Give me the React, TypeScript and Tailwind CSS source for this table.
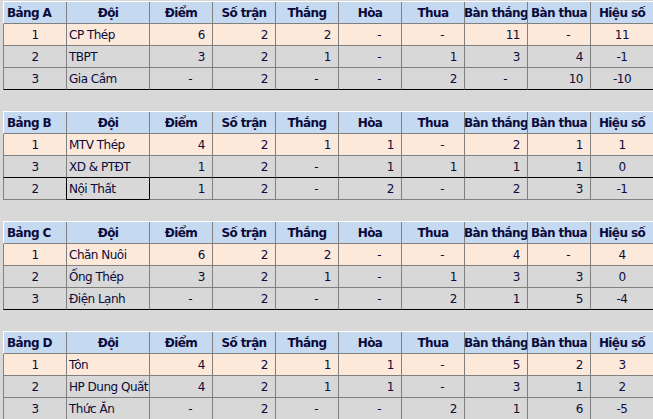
import React from "react";

type Group = {
    name: string;
    rows: string[][];
    lines: ("gray" | "black")[];
    boxed?: [number, number];
};

const groups: Group[] = [
    {
        name: "Bảng A",
        rows: [
            ["1", "CP Thép", "6", "2", "2", "-", "-", "11", "-", "11"],
            ["2", "TBPT", "3", "2", "1", "-", "1", "3", "4", "-1"],
            ["3", "Gia Cầm", "-", "2", "-", "-", "2", "-", "10", "-10"],
        ],
        lines: ["gray", "gray", "black"],
    },
    {
        name: "Bảng B",
        rows: [
            ["1", "MTV Thép", "4", "2", "1", "1", "-", "2", "1", "1"],
            ["3", "XD & PTĐT", "1", "2", "-", "1", "1", "1", "1", "0"],
            ["2", "Nội Thất", "1", "2", "-", "2", "-", "2", "3", "-1"],
        ],
        lines: ["gray", "black", "gray"],
        boxed: [2, 1],
    },
    {
        name: "Bảng C",
        rows: [
            ["1", "Chăn Nuôi", "6", "2", "2", "-", "-", "4", "-", "4"],
            ["2", "Ống Thép", "3", "2", "1", "-", "1", "3", "3", "0"],
            ["3", "Điện Lạnh", "-", "2", "-", "-", "2", "1", "5", "-4"],
        ],
        lines: ["gray", "gray", "black"],
    },
    {
        name: "Bảng D",
        rows: [
            ["1", "Tôn", "4", "2", "1", "1", "-", "5", "2", "3"],
            ["2", "HP Dung Quất", "4", "2", "1", "1", "-", "3", "1", "2"],
            ["3", "Thức Ăn", "-", "2", "-", "-", "2", "1", "6", "-5"],
        ],
        lines: ["gray", "gray", "black"],
    },
];

const heads = ["Đội", "Điểm", "Số trận", "Thắng", "Hòa", "Thua", "Bàn thắng", "Bàn thua", "Hiệu số"];

function align(i: number, v: string) {
    if (i === 0 || i === 9) return "justify-center";
    if (i === 1) return "justify-start pl-[2px]";
    return v === "-" ? "justify-end pr-[20px]" : "justify-end pr-[7px]";
}

function Table({ g }: { g: Group }) {
    return (
        <div className="flex flex-col">
            <div className="flex h-[23px] border-t border-white bg-[#c5d9f1] font-bold tracking-[-0.6px]">
                <div className="w-[63px] shrink-0 flex items-center pl-[3px] border-l border-white border-b border-b-[#808080]">
                    {g.name}
                </div>
                {heads.map((h, i) => (
                    <div
                        key={h}
                        className={`${i === 0 ? "w-[83px]" : "w-[63px]"} shrink-0 flex items-center justify-center whitespace-nowrap border-l border-b border-[#808080]`}
                    >
                        {h}
                    </div>
                ))}
            </div>
            {g.rows.map((r, ri) => (
                <div key={ri} className={`flex h-[22px] ${ri === 0 ? "bg-[#fde9d9]" : "bg-[#d8d8d8]"}`}>
                    {r.map((v, ci) => {
                        const boxed = g.boxed && g.boxed[0] === ri;
                        const leftBlack = boxed && (ci === 1 || ci === 2);
                        const bottomBlack = g.lines[ri] === "black" || (boxed && ci === 1);
                        return (
                            <div
                                key={ci}
                                className={`${ci === 1 ? "w-[83px]" : "w-[63px]"} shrink-0 flex items-center whitespace-nowrap border-l border-b ${leftBlack ? "border-l-black" : "border-l-[#808080]"} ${bottomBlack ? "border-b-black" : "border-b-[#808080]"} ${align(ci, v)}`}
                            >
                                {v}
                            </div>
                        );
                    })}
                </div>
            ))}
        </div>
    );
}

export default function App() {
    return (
        <div
            className="w-[653px] h-[419px] overflow-hidden bg-[#d8d8d8] pt-[1px] pl-[3px] flex flex-col gap-[21px] text-[12px] tracking-[-0.5px] text-[#0b0b3b]"
            style={{ fontFamily: '"DejaVu Sans", sans-serif' }}
        >
            {groups.map((g) => (
                <Table key={g.name} g={g} />
            ))}
        </div>
    );
}
